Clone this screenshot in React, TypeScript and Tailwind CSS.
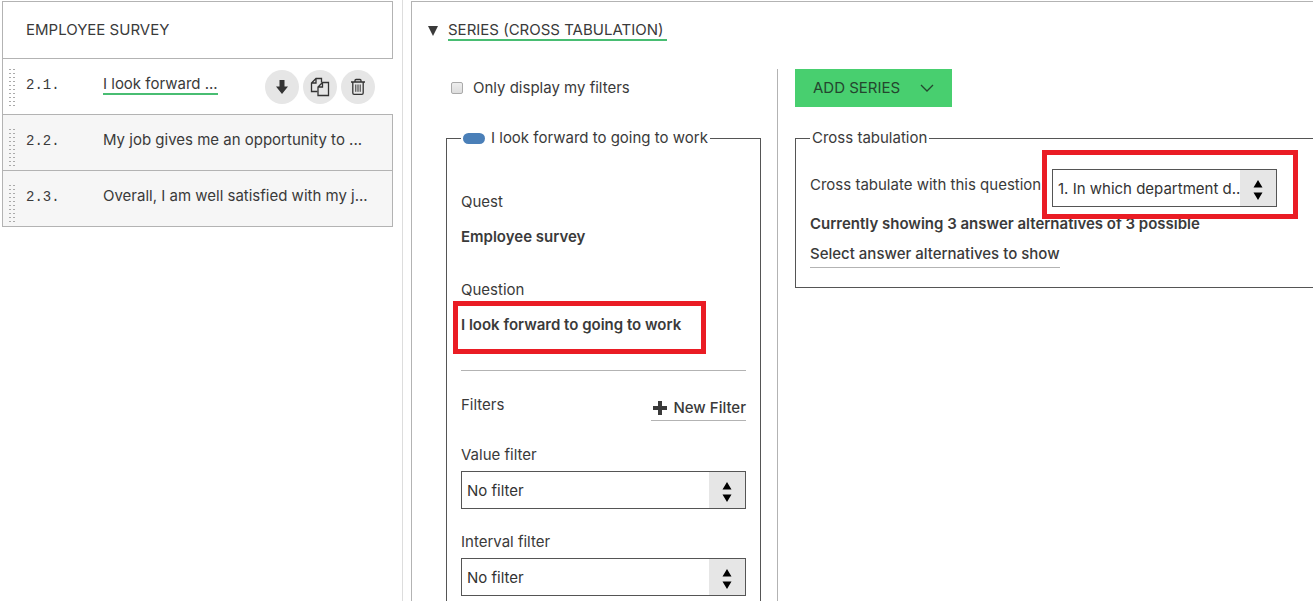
import type { ReactNode } from "react";

function Highlight({ className }: { className: string }) {
  return (
    <span
      aria-hidden="true"
      className={`pointer-events-none absolute border-5 border-[#ea1c24] ${className}`}
    />
  );
}

function SelectBox({ id, options }: { id: string; options: string[] }) {
  return (
    <div className="relative h-[38px] w-full">
      <select
        id={id}
        className="h-full w-full appearance-none rounded-none border border-[#555] bg-white pt-0.5 pr-9 pl-[5px] text-[15px] text-[#333]"
      >
        {options.map((o) => (
          <option key={o}>{o}</option>
        ))}
      </select>
      <span className="pointer-events-none absolute inset-y-px right-px flex w-9 items-center justify-center bg-[#e6e6e6]">
        <svg width="10" height="20" viewBox="0 0 10 20" className="mt-1 fill-black" aria-hidden="true">
          <path d="M5 0 9.500 7.500H.5zM5 20 .5 12.500h9z" />
        </svg>
      </span>
    </div>
  );
}

function Grip({ className }: { className: string }) {
  return (
    <svg width="6" height="38" className={className} aria-hidden="true">
      <path d="M1 0V38M5 0V38" stroke="#aaa" strokeWidth="2" strokeDasharray="1 3" />
    </svg>
  );
}

function RoundButton({ label, children }: { label: string; children: ReactNode }) {
  return (
    <button
      type="button"
      aria-label={label}
      className="flex size-[34px] items-center justify-center rounded-full bg-[#e6e6e6] text-[#333]"
    >
      {children}
    </button>
  );
}

function QuestionRow({ number, title }: { number: string; title: string }) {
  return (
    <li className="flex h-14 border border-t-0 border-[#b3b3b3] bg-[#f6f6f6] pl-1.5">
      <Grip className="mt-3.5" />
      <span className="mt-4 ml-[11px] w-[77px] shrink-0 font-['Liberation_Mono',monospace] text-sm leading-5">
        {number}
      </span>
      <span className="mt-[15px] whitespace-nowrap">{title}</span>
    </li>
  );
}

function Sidebar() {
  return (
    <aside className="w-[401px] shrink-0 border-r border-[#ddd] pt-px pr-[9px]">
      <h2 className="flex h-[58px] items-center border border-[#b3b3b3] pl-[23px]">EMPLOYEE SURVEY</h2>
      <ul>
        <li className="flex h-14 border-b border-l border-[#b3b3b3] pr-[18px] pl-1.5">
          <Grip className="mt-2.5" />
          <span className="mt-4 ml-[11px] w-[77px] shrink-0 font-['Liberation_Mono',monospace] text-sm leading-5">
            2.1.
          </span>
          <a href="#q1" className="mt-4 h-5 border-b-2 border-[#48bd72] leading-[18px] whitespace-nowrap">
            I look forward ...
          </a>
          <div className="mt-[11px] ml-auto flex gap-1">
            <RoundButton label="Move down">
              <svg width="12" height="14" viewBox="0 0 12 14" fill="currentColor" aria-hidden="true">
                <path d="M3.500 0h5v6.500H12L6 14 0 6.500h3.500z" />
              </svg>
            </RoundButton>
            <RoundButton label="Copy">
              <svg
                width="20"
                height="20"
                viewBox="0 0 20 20"
                fill="none"
                stroke="currentColor"
                strokeWidth="1.300"
                aria-hidden="true"
              >
                <path d="M7.500 14.500H1.500V6L6 1.500h5.500V5.500M6 1.500V6H1.500" />
                <path d="M12.500 5.500h6V18.500H8V10zM12.500 5.500V10H8" />
              </svg>
            </RoundButton>
            <RoundButton label="Delete">
              <svg
                width="16"
                height="18"
                viewBox="0 0 16 18"
                fill="none"
                stroke="currentColor"
                strokeWidth="1.300"
                aria-hidden="true"
              >
                <path d="M1 4h14M5 4V2.500Q5 1.500 6 1.500h4q1 0 1 1V4M2.800 4v11q0 1.300 1.300 1.300h7.800q1.300 0 1.300-1.300V4" />
                <path d="M5.800 6.500v7.300M8 6.500v7.300M10.200 6.500v7.300" strokeWidth="1" />
              </svg>
            </RoundButton>
          </div>
        </li>
        <QuestionRow number="2.2." title="My job gives me an opportunity to ..." />
        <QuestionRow number="2.3." title="Overall, I am well satisfied with my j..." />
      </ul>
    </aside>
  );
}

function SeriesFieldset() {
  return (
    <fieldset className="mt-[30px] w-[315px] border border-[#555] px-3.5 pb-10">
      <legend className="flex items-center gap-1.5 px-0.5 leading-5">
        <span className="h-[11px] w-[22px] rounded-full bg-[#4a7fb8]" />
        <span>I look forward to going to work</span>
      </legend>
      <dl className="pt-11">
        <dt>Quest</dt>
        <dd className="mt-[15px] font-semibold">Employee survey</dd>
        <dt className="mt-[33px]">Question</dt>
        <dd className="relative mt-[15px] font-semibold">
          I look forward to going to work
          <Highlight className="-top-3.5 -left-2 h-[53px] w-[253px]" />
        </dd>
      </dl>
      <hr className="mt-[35px] border-[#b3b3b3]" />
      <div className="mt-6 flex items-start justify-between">
        <h3>Filters</h3>
        <button
          type="button"
          className="mt-[3px] flex h-[23px] items-start gap-1.5 border-b border-[#b3b3b3] pl-0.5 font-medium"
        >
          <svg width="14" height="14" viewBox="0 0 14 14" className="mt-[3px]" fill="currentColor" aria-hidden="true">
            <path d="M5 0h4v5h5v4H9v5H5V9H0V5h5z" />
          </svg>
          New Filter
        </button>
      </div>
      <div className="mt-6">
        <label htmlFor="value-filter" className="mb-1.5 block">
          Value filter
        </label>
        <SelectBox id="value-filter" options={["No filter"]} />
      </div>
      <div className="mt-[23px]">
        <label htmlFor="interval-filter" className="mb-1.5 block">
          Interval filter
        </label>
        <SelectBox id="interval-filter" options={["No filter"]} />
      </div>
    </fieldset>
  );
}

function CrossTabulation() {
  return (
    <fieldset className="mt-[21px] h-40 border border-r-0 border-[#555] pl-3.5">
      <legend className="px-0.5 leading-5">Cross tabulation</legend>
      <div className="flex pt-[21px]">
        <label htmlFor="cross-question" className="mt-1.5 w-[242px] shrink-0 whitespace-nowrap">
          Cross tabulate with this question
        </label>
        <div className="relative w-[225px]">
          <SelectBox id="cross-question" options={["1. In which department d.."]} />
          <Highlight className="-top-[19px] -left-2.5 h-[69px] w-64" />
        </div>
      </div>
      <p className="mt-[7px] font-semibold">Currently showing 3 answer alternatives of 3 possible</p>
      <a href="#alternatives" className="mt-2.5 inline-block border-b border-[#b3b3b3] pb-[3px] font-medium">
        Select answer alternatives to show
      </a>
    </fieldset>
  );
}

export default function App() {
  return (
    <div className="flex h-screen overflow-hidden bg-white pl-0.5 font-['Inter',sans-serif] text-[15px] leading-5 text-[#3a3a3a]">
      <Sidebar />
      <main className="mt-px ml-2 flex min-w-0 flex-1 flex-col border-t border-l border-[#b3b3b3]">
        <button type="button" className="mt-[18px] ml-4 flex items-start gap-2.5 self-start">
          <svg width="10" height="10" viewBox="0 0 10 10" className="mt-[6px]" fill="currentColor" aria-hidden="true">
            <path d="M0 0h10L5 10z" />
          </svg>
          <span className="border-b-2 border-[#48bd72] pt-px pr-1 leading-[18px]">SERIES (CROSS TABULATION)</span>
        </button>
        <div className="mt-7 flex flex-1">
          <section className="w-[366px] shrink-0 border-r border-[#b3b3b3] pl-[34px]">
            <label className="mt-[9px] ml-[5px] flex items-center gap-2.5">
              <input
                type="checkbox"
                className="size-3 appearance-none rounded-xs border border-[#aaa] bg-linear-to-b from-[#eee] to-[#ddd]"
              />
              Only display my filters
            </label>
            <SeriesFieldset />
          </section>
          <section className="min-w-0 flex-1 pl-[17px]">
            <button
              type="button"
              className="flex h-[38px] items-center gap-5 bg-[#48cf6f] pr-[18px] pl-[18px] text-[#24462e]"
            >
              ADD SERIES
              <svg width="14" height="8" viewBox="0 0 14 8" fill="none" stroke="currentColor" strokeWidth="1.300" aria-hidden="true">
                <path d="M1 1l6 6 6-6" />
              </svg>
            </button>
            <CrossTabulation />
          </section>
        </div>
      </main>
    </div>
  );
}
